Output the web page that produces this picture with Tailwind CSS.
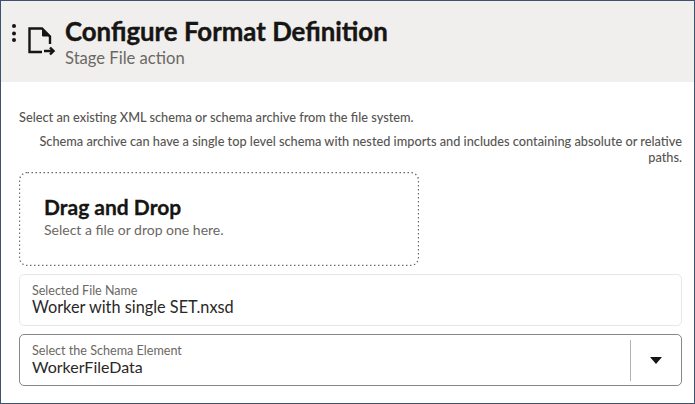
<!DOCTYPE html>
<html lang="en">
<head>
    <meta charset="UTF-8">
    <title>Configure Format Definition</title>
    <script src="https://cdn.jsdelivr.net/npm/@tailwindcss/browser@4"></script>
</head>
<body class="bg-white font-['Lato','Noto_Sans',sans-serif]">
    <div class="w-[695px] h-[404px] border border-[#3f5170] overflow-hidden flex flex-col">
        <!-- Header -->
        <header class="h-[81px] shrink-0 bg-[#f1efed] flex items-start">
            <svg class="w-[6px] h-[20px] ml-[10px] mt-[22px] shrink-0" viewBox="0 0 6 20" fill="#161513">
                <circle cx="3" cy="3" r="2"></circle>
                <circle cx="3" cy="10.500" r="2"></circle>
                <circle cx="3" cy="17" r="2"></circle>
            </svg>
            <svg class="w-[28px] h-[30px] ml-[10px] mt-[25px] shrink-0" viewBox="0 0 28 30" fill="none" stroke="#161513" stroke-width="2.400">
                <path d="M23 18V10.500L15 2.500H2.500V26H15"></path>
                <path d="M15.500 3v7h7z" fill="#161513" stroke-width="1"></path>
                <path d="M17 25h9M23 21.500l3.500 3.500-3.500 3.500"></path>
            </svg>
            <div class="ml-[10px] mt-[15px]">
                <h1 class="text-[25.800px] leading-[30px] font-bold text-[#161513] [-webkit-text-stroke:0.4px_#161513]">Configure Format Definition</h1>
                <p class="text-[16.600px] leading-[21px] text-[#6b6864] mt-[2px]">Stage File action</p>
            </div>
        </header>

        <main class="flex-1 pl-[18px] pr-[12px]">
            <p class="text-[12.750px] leading-[16px] font-medium text-[#575552] mt-[27px]">Select an existing XML schema or schema archive from the file system.</p>
            <p class="text-[12.750px] leading-[16px] font-medium text-[#575552] text-right mt-[8px]">Schema archive can have a single top level schema with nested imports and includes containing absolute or relative paths.</p>

            <!-- Drop zone -->
            <div class="relative w-[400px] h-[94px] mt-[7px] pl-[25px] pt-[22px]">
                <svg class="absolute inset-0 w-[400px] h-[94px]" viewBox="0 0 400 94" fill="none">
                    <rect x="0.500" y="0.500" width="399" height="93" rx="8" stroke="#6f6c69" stroke-width="1.300" stroke-dasharray="1.500 2.500"></rect>
                </svg>
                <h2 class="text-[21px] leading-[26px] font-bold text-[#161513] [-webkit-text-stroke:0.3px_#161513]">Drag and Drop</h2>
                <p class="text-[14px] leading-[20px] text-[#6b6864]">Select a file or drop one here.</p>
            </div>

            <!-- Selected file -->
            <div class="w-[663px] h-[52px] mt-[8px] border border-[#e9e7e5] rounded-[5px] pl-[12px] pt-[9px]">
                <div class="text-[12.500px] leading-[13px] text-[#6b6864]">Selected File Name</div>
                <div class="text-[16.300px] leading-[19px] text-[#2a2826]">Worker with single SET.nxsd</div>
            </div>

            <!-- Schema element select -->
            <div class="w-[663px] h-[52px] mt-[8px] border border-[#8a8886] rounded-[5px] flex items-center">
                <div class="flex-1 pl-[12px]">
                    <div class="text-[12.600px] leading-[13px] text-[#6b6864]">Select the Schema Element</div>
                    <div class="text-[16px] leading-[19px] text-[#2a2826]">WorkerFileData</div>
                </div>
                <div class="w-px h-[41px] bg-[#b5b3b1]"></div>
                <div class="w-[50px] flex justify-center">
                    <svg class="w-[12px] h-[7px]" viewBox="0 0 12 7" fill="#161513"><path d="M0 0h12L6 7z"></path></svg>
                </div>
            </div>
        </main>
    </div>
</body>
</html>
